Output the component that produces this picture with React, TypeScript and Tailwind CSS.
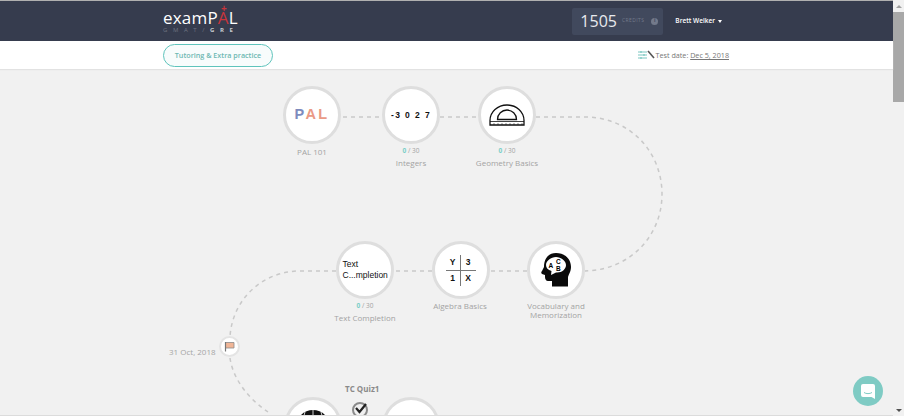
const Circle = ({ x, y, children }: { x: number; y: number; children?: React.ReactNode }) => (
  <div
    className="absolute flex h-[58px] w-[58px] -translate-x-1/2 -translate-y-1/2 items-center justify-center overflow-hidden rounded-full border-[3px] border-[#dedede] bg-white"
    style={{ left: x, top: y }}
  >
    {children}
  </div>
);

const Caption = ({ x, y, score, label }: { x: number; y: number; score?: boolean; label: React.ReactNode }) => (
  <div className="absolute w-[120px] -translate-x-1/2 text-center text-[8px] leading-[9px] text-[#a3a3a3]" style={{ left: x, top: y }}>
    {score && (
      <div className="mb-[2px] text-[6.5px] leading-[10px]">
        <span className="font-bold text-[#7ccfc8]">0</span> / 30
      </div>
    )}
    {label}
  </div>
);

function Protractor() {
  return (
    <svg width="36" height="22" viewBox="0 0 36 22" fill="none" stroke="#111" strokeWidth="1.3">
      <path d="M1 21V16.5A17 15.5 0 0 1 35 16.5V21Z" />
      <path d="M8.5 15.5A9.5 9.5 0 0 1 27.5 15.5Z" />
      <path d="M1 17.5H35" strokeWidth="0.8" />
      <path d="M5 19V21M9 19V21M13 19V21M17 19V21M21 19V21M25 19V21M29 19V21M33 19V21" strokeWidth="0.5" />
    </svg>
  );
}

function AlgebraGrid() {
  return (
    <div className="grid w-[30px] grid-cols-2 text-center text-[8.5px] font-bold leading-[15px] text-[#111] font-['Liberation_Sans',sans-serif]">
      <span className="border-r border-b border-[#777]">Y</span>
      <span className="border-b border-[#777]">3</span>
      <span className="border-r border-[#777]">1</span>
      <span>X</span>
    </div>
  );
}

function HeadIcon() {
  return (
    <svg width="30" height="34" viewBox="0 0 30 34" className="font-['Liberation_Sans',sans-serif]">
      <path
        d="M15 0C24 0 30 6 30 14C30 19 27 22 27 25V33.5H11V28H7C5 28 4 26 4 24V22L1 21C0 20 0 19 1 18L3 14C3 6 7 0 15 0Z"
        fill="#0a0a0a"
      />
      <path d="M15 4C20 4 25 8 25 12C25 16 21 20 15 19.5L10 22L10.5 18C7 17 5 15 5 12C5 8 10 4 15 4Z" fill="#fff" />
      <text x="7.5" y="14.5" fontSize="6.5" fontWeight="700" fill="#000">A</text>
      <text x="15" y="10.5" fontSize="6.5" fontWeight="700" fill="#000">C</text>
      <text x="15" y="18" fontSize="6.5" fontWeight="700" fill="#000">B</text>
    </svg>
  );
}

export default function App() {
  return (
    <div className="relative flex h-[416px] w-[904px] overflow-hidden bg-[#f1f1f1] font-['Open_Sans',sans-serif]">
      <div className="relative min-w-0 flex-1">
        <header className="flex h-[41px] items-center border-t border-[#b0b0b0] bg-[#363c4e] pl-[163px] pr-[171px]">
          <div className="relative">
            <div className="text-[17px] leading-[19px] tracking-[0.2px] text-white">
              examP<span className="text-[#c8343b]">A</span>L
            </div>
            <span className="absolute left-[58px] top-[-5px] text-[10px] font-bold leading-[10px] text-[#c8343b]">+</span>
            <div className="whitespace-nowrap text-[6px] leading-[7px] tracking-[5.6px] text-[#6d7280]">
              GMAT/<span className="font-bold text-[#c9ccd2]">GRE</span>
            </div>
          </div>
          <div className="ml-auto flex h-[27px] w-[91px] items-center rounded-[2px] bg-[#41495d] pl-[8px]">
            <span className="text-[16px] leading-none text-[#e8eaee]">1505</span>
            <span className="ml-[5px] text-[5px] tracking-[0.4px] text-[#737a8b]">CREDITS</span>
            <span className="ml-[7px] flex h-[7px] w-[7px] items-center justify-center rounded-full bg-[#737a8b] text-[5px] font-bold text-[#41495d]">i</span>
          </div>
          <div className="ml-[12px] flex items-center text-[6.5px] font-semibold text-white">
            Brett Welker
            <span className="ml-[3px] h-0 w-0 border-x-[2.5px] border-t-[3px] border-x-transparent border-t-white" />
          </div>
        </header>

        <div className="flex h-[28px] items-center bg-white pl-[163px] pr-[164px] shadow-[0_1px_1px_#e2e2e2]">
          <div className="flex h-[23px] w-[110px] items-center justify-center rounded-full border border-[#5fc4bc] bg-[#f8fcfc] text-[7.2px] font-semibold text-[#6db8b2]">
            Tutoring &amp; Extra practice
          </div>
          <div className="ml-auto flex items-center text-[7.2px] text-[#777]">
            <svg width="17" height="10" viewBox="0 0 17 10" className="mr-[1px]">
              <path d="M0 2h9M0 5h9M0 8h9" stroke="#7cc8c2" strokeWidth="1.2" />
              <path d="M3 1v2M6 4v2M3 7v2" stroke="#7cc8c2" strokeWidth="1.2" />
              <path d="M10 1l6 7" stroke="#555" strokeWidth="1.6" />
            </svg>
            Test date:&nbsp;<span className="underline">Dec 5, 2018</span>
          </div>
        </div>

        <svg className="absolute left-0 top-0" width="893" height="416" fill="none" stroke="#c9c9c9" strokeWidth="1.5" strokeDasharray="4 4">
          <path d="M343 117H382M440 117H478M536 117H585C630 117 662 152 662 194C662 236 630 270 585 271M527 271H490M432 271H393M336 271H300C262 271 232 300 230 337" />
          <path d="M230 358C233 380 250 400 268 412" />
        </svg>

        <Circle x={312} y={115}>
          <span className="text-[14.5px] font-bold tracking-[2.3px] font-['Liberation_Sans',sans-serif]">
            <span className="text-[#7e8bbd]">P</span>
            <span className="text-[#ea9a86]">A</span>
            <span className="text-[#ea9a86]">L</span>
          </span>
        </Circle>
        <Circle x={411} y={115}>
          <span className="whitespace-nowrap text-[8.5px] font-bold tracking-[1.4px] text-[#111] font-['Liberation_Sans',sans-serif]">-3 0 2 7</span>
        </Circle>
        <Circle x={507} y={115}>
          <Protractor />
        </Circle>
        <Circle x={364.5} y={270}>
          <div className="w-[44px] whitespace-nowrap text-[8.5px] leading-[11px] text-[#111] font-['Liberation_Sans',sans-serif]">
            Text
            <br />
            C...mpletion
          </div>
        </Circle>
        <Circle x={460.5} y={270}>
          <AlgebraGrid />
        </Circle>
        <Circle x={556} y={270}>
          <HeadIcon />
        </Circle>
        <Circle x={313} y={426}>
          <svg width="36" height="38" viewBox="0 0 36 38" fill="none">
            <circle cx="18" cy="20" r="17" fill="#111" />
            <path d="M18 3V37M10 5C7 14 7 26 10 35M26 5C29 14 29 26 26 35M3 12H33M2 17H34" stroke="#fff" strokeWidth="0.8" />
          </svg>
        </Circle>
        <Circle x={411} y={426} />

        <Caption x={312} y={147} label="PAL 101" />
        <Caption x={411} y={146} score label="Integers" />
        <Caption x={507} y={146} score label="Geometry Basics" />
        <Caption x={365} y={301} score label="Text Completion" />
        <Caption x={460} y={301} label="Algebra Basics" />
        <Caption x={556} y={301} label={<>Vocabulary and<br />Memorization</>} />

        <div className="absolute left-[169px] top-[346px] text-[8px] leading-[12px] text-[#a5a5a5]">31 Oct, 2018</div>
        <div className="absolute left-[219px] top-[336px] flex h-[21px] w-[21px] items-center justify-center rounded-full border-2 border-[#e4e4e4] bg-white">
          <svg width="11" height="11" viewBox="0 0 11 11">
            <path d="M1.5 1.5H10V7H1.5Z" fill="#f0b596" stroke="#8a8a8a" strokeWidth="0.8" />
            <path d="M1.5 1V10.5" stroke="#777" strokeWidth="1.2" />
          </svg>
        </div>

        <div className="absolute left-[345px] top-[383px] text-[8px] font-bold text-[#8a8a8a]">TC Quiz1</div>
        <div className="absolute left-[352px] top-[402px] h-[16px] w-[16px] rounded-full border-2 border-[#8b8b8b] bg-[#f1f1f1]">
          <svg width="14" height="12" viewBox="0 0 14 12" className="absolute -top-[1px] left-0" fill="none" stroke="#222" strokeWidth="2.2">
            <path d="M2 5L5.5 9L12 1" />
          </svg>
        </div>

        <div className="absolute left-[853px] top-[376px] flex h-[30px] w-[30px] items-center justify-center rounded-full bg-[#7fcbc4]">
          <svg width="14" height="15" viewBox="0 0 14 15">
            <path d="M2 0H12A2 2 0 0 1 14 2V15L10.5 13H2A2 2 0 0 1 0 11V2A2 2 0 0 1 2 0Z" fill="#fff" />
            <path d="M3 8.5C5 10 9 10 11 8.5" stroke="#7fcbc4" strokeWidth="1" fill="none" />
          </svg>
        </div>
        <div className="absolute bottom-0 left-0 h-px w-full bg-[#dcdcdc]" />
      </div>

      <aside className="flex w-[11px] shrink-0 flex-col bg-[#f1f1f1]">
        <div className="flex h-[12px] items-center justify-center">
          <span className="h-0 w-0 border-x-[3px] border-b-[3px] border-x-transparent border-b-[#a0a0a0]" />
        </div>
        <div className="h-[90px] bg-[#a8a8a8]" />
        <div className="mt-auto flex h-[12px] items-center justify-center">
          <span className="h-0 w-0 border-x-[3px] border-t-[3px] border-x-transparent border-t-[#505050]" />
        </div>
      </aside>
    </div>
  );
}
